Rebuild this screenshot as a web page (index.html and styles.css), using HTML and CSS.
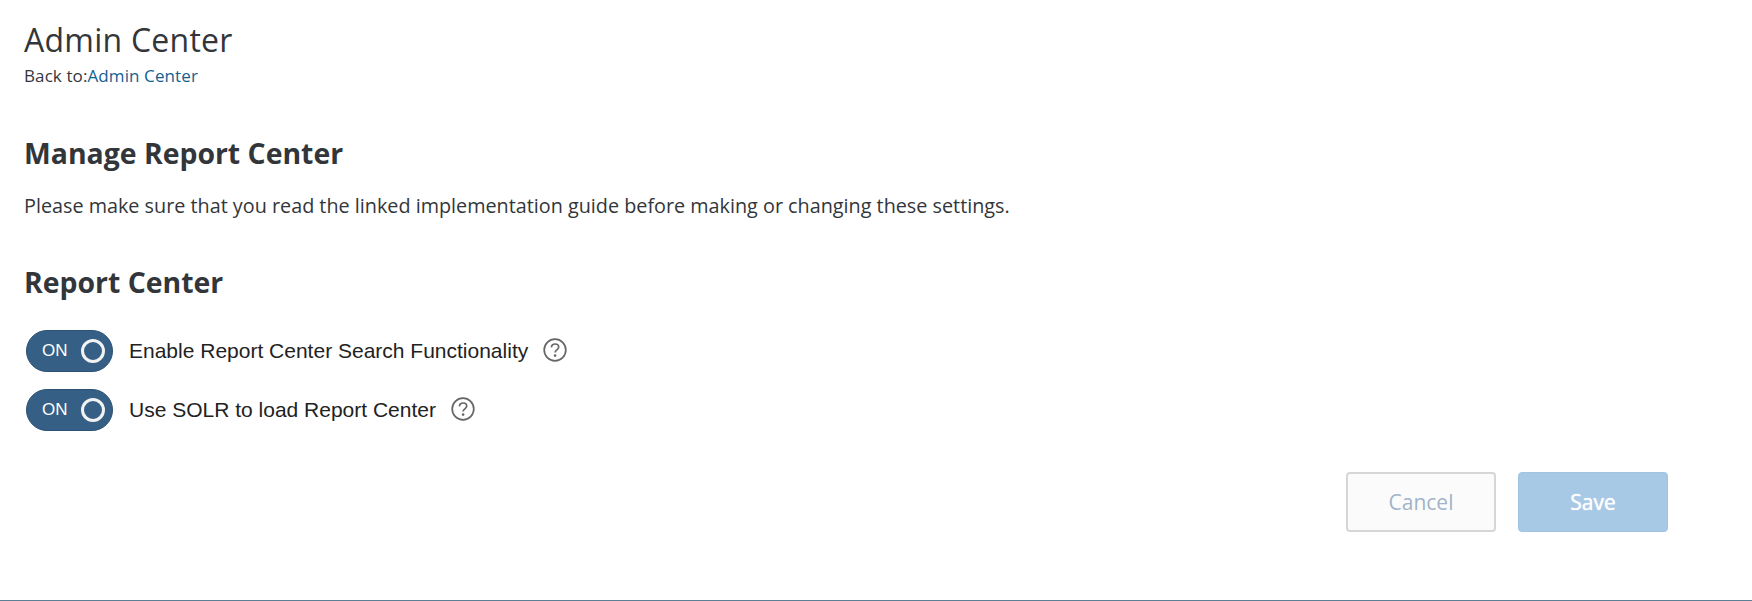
FILE: index.html
```html
<!DOCTYPE html>
<html lang="en">
<head>
  <meta charset="UTF-8">
  <title>Manage Report Center</title>
  <link rel="stylesheet" href="styles.css">
</head>
<body>
  <div class="pagina">
    <header class="topo">
      <h1>Admin Center</h1>
      <p class="voltar">Back to:<a href="#">Admin Center</a></p>
    </header>

    <h2 class="titulo-gerir">Manage Report Center</h2>
    <p class="aviso">Please make sure that you read the linked implementation guide before making or changing these settings.</p>

    <h2 class="titulo-seccao">Report Center</h2>

    <div class="opcao">
      <span class="toggle">ON<span class="toggle-bola"></span></span>
      <span class="opcao-texto">Enable Report Center Search Functionality</span>
      <svg class="ajuda" viewBox="0 0 24 24" width="24" height="24"><circle cx="12" cy="12" r="10.8"/><path d="M8.4 9.4c.2-2.200 1.700-3.400 3.700-3.400 2.100 0 3.600 1.300 3.600 3.100 0 1.400-.8 2.100-1.800 2.800-1 .7-1.800 1.300-1.800 2.600"/><circle class="ajuda-ponto" cx="12.100" cy="17.600" r="1.300"/></svg>
    </div>
    <div class="opcao">
      <span class="toggle">ON<span class="toggle-bola"></span></span>
      <span class="opcao-texto">Use SOLR to load Report Center</span>
      <svg class="ajuda" viewBox="0 0 24 24" width="24" height="24"><circle cx="12" cy="12" r="10.8"/><path d="M8.4 9.4c.2-2.200 1.700-3.400 3.700-3.400 2.100 0 3.600 1.300 3.600 3.100 0 1.400-.8 2.100-1.800 2.800-1 .7-1.800 1.300-1.800 2.600"/><circle class="ajuda-ponto" cx="12.100" cy="17.600" r="1.300"/></svg>
    </div>

    <div class="botoes">
      <button class="btn btn-cancelar" disabled>Cancel</button>
      <button class="btn btn-guardar" disabled>Save</button>
    </div>
  </div>
</body>
</html>
```

FILE: styles.css
```css
html, body {
  height: 100%;
}

body {
  font-family: 'Open Sans', 'Noto Sans', sans-serif;
  margin: 0;
  background-color: #fff;
  color: #32363a;
}

.pagina {
  box-sizing: border-box;
  height: 601px;
  padding: 18px 84px 0 24px;
  border-bottom: 1px solid #5b7f95;
  overflow: hidden;
}

h1 {
  font-size: 32px;
  font-weight: 400;
  line-height: 44px;
  margin: 0;
  letter-spacing: 0.25px;
}

.voltar {
  font-size: 17px;
  line-height: 22px;
  margin: 3px 0 0;
  letter-spacing: 0.1px;
}

.voltar a {
  color: #11618f;
  text-decoration: none;
}

h2 {
  font-size: 28.4px;
  font-weight: 700;
  line-height: 36px;
  margin: 0;
}

.titulo-gerir {
  margin-top: 48px;
}

.aviso {
  font-size: 19.8px;
  line-height: 26px;
  margin: 22px 0 0;
}

.titulo-seccao {
  margin: 45px 0 30px;
}

.opcao {
  display: flex;
  align-items: center;
  height: 42px;
  margin-bottom: 17px;
  padding-left: 2px;
  font-family: 'Liberation Sans', Arial, sans-serif;
  color: #222;
}

.toggle {
  box-sizing: border-box;
  display: flex;
  align-items: center;
  justify-content: space-between;
  width: 87px;
  height: 42px;
  padding: 0 7px 0 15px;
  border-radius: 21px;
  background-color: #355f85;
  border: 1px solid #2b5275;
  color: #fff;
  font-size: 17px;
}

.toggle-bola {
  box-sizing: border-box;
  width: 24px;
  height: 24px;
  border: 3px solid #f2f2f2;
  border-radius: 50%;
}

.opcao-texto {
  font-size: 21px;
  margin-left: 16px;
}

.ajuda {
  margin-left: 15px;
  margin-top: -2px;
  fill: none;
  stroke: #666;
  stroke-width: 1.700;
}

.ajuda-ponto {
  fill: #666;
  stroke: none;
}

.botoes {
  display: flex;
  justify-content: flex-end;
  gap: 22px;
  margin-top: 41px;
}

.btn {
  box-sizing: border-box;
  width: 150px;
  height: 60px;
  border-radius: 4px;
  font-family: 'Open Sans', 'Noto Sans', sans-serif;
  font-size: 21px;
}

.btn-cancelar {
  background-color: #fbfbfb;
  border: 2px solid #d6d6d6;
  color: #9fb4c9;
}

.btn-guardar {
  background-color: #a8c9e5;
  border: 1px solid #9fc3e2;
  color: #fff;
  text-shadow: 0 0 1px #fff;
}
```
